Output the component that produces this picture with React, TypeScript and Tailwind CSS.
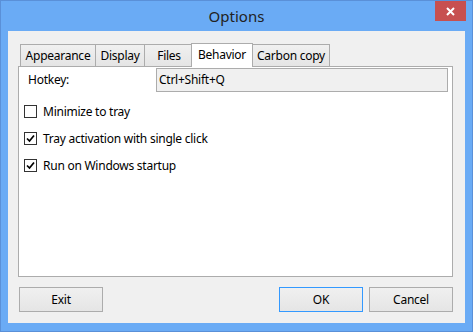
import { useState } from 'react';

const tabs = [
  { label: 'Appearance', width: 'w-[76px]', offset: '' },
  { label: 'Display', width: 'w-[50px]', offset: '-ml-px' },
  { label: 'Files', width: 'w-[50px]', offset: '-ml-px' },
  { label: 'Behavior', width: 'w-[62px]', offset: 'ml-[-3px]' },
  { label: 'Carbon copy', width: 'w-[78px]', offset: '-ml-px' },
];

function Checkbox({ label, checked, onToggle }: { label: string; checked: boolean; onToggle: () => void }) {
  return (
    <div className="flex items-center h-[13px] pl-[5px] cursor-default" onClick={onToggle}>
      <div className="w-[13px] h-[13px] border border-[#333333] bg-white flex items-center justify-center shrink-0">
        {checked && (
          <svg width="9" height="9" viewBox="0 0 9 9">
            <path d="M1 4.5 L3.5 7 L8 1.5" fill="none" stroke="#000" strokeWidth="1.7" />
          </svg>
        )}
      </div>
      <span className="ml-[6px] text-[12px] leading-none text-black">{label}</span>
    </div>
  );
}

export default function App() {
  const [active] = useState('Behavior');
  const [opts, setOpts] = useState({ minimize: false, single: true, startup: true });

  const toggle = (k: keyof typeof opts) => setOpts({ ...opts, [k]: !opts[k] });

  return (
    <div
      className="w-[473px] h-[332px] flex flex-col bg-[#6aabf5] border border-[#5a90d8] select-none tracking-[-0.25px]"
      style={{ fontFamily: '"Noto Sans", "Open Sans", sans-serif' }}
    >
      {/* Title bar */}
      <div className="h-[30px] flex items-start shrink-0">
        <div className="w-[37px]" />
        <div className="flex-1 text-center text-[15px] leading-[30px] text-[#222222] tracking-normal">Options</div>
        <div className="w-[31px] h-[20px] bg-[#c75050] flex items-center justify-center">
          <svg width="9" height="9" viewBox="0 0 9 9">
            <path d="M1 1 L8 8 M8 1 L1 8" stroke="#fff" strokeWidth="2" />
          </svg>
        </div>
        <div className="w-[6px]" />
      </div>

      {/* Client area */}
      <div className="mx-[7px] mb-[8px] flex-1 bg-[#f0f0f0] pt-[12px] pl-[10px] pr-[12px] flex flex-col">
        {/* Tabs */}
        <div className="flex items-end h-[23px] pl-[2px] relative z-10">
          {tabs.map((t) => {
            const sel = t.label === active;
            return (
              <div
                key={t.label}
                className={`${t.width} ${t.offset} flex items-center justify-center text-[12px] text-black border border-[#acacac] border-b-0 ${
                  sel ? 'h-[24px] mb-[-1px] bg-white z-10 relative pb-[2px]' : 'h-[22px] bg-gradient-to-b from-[#f0f0f0] to-[#e5e5e5]'
                }`}
              >
                {t.label}
              </div>
            );
          })}
        </div>

        {/* Panel */}
        <div className="h-[211px] border border-[#acacac] bg-white flex flex-col">
          <div className="flex items-center mt-[1px] pl-[9px]">
            <div className="w-[128px] text-[12px] text-black">Hotkey:</div>
            <div className="w-[292px] h-[24px] border border-[#acacac] bg-[#f0f0f0] flex items-center pl-[2px] text-[12px] text-black">
              Ctrl+Shift+Q
            </div>
          </div>
          <div className="flex flex-col gap-[14px] mt-[13px]">
            <Checkbox label="Minimize to tray" checked={opts.minimize} onToggle={() => toggle('minimize')} />
            <Checkbox label="Tray activation with single click" checked={opts.single} onToggle={() => toggle('single')} />
            <Checkbox label="Run on Windows startup" checked={opts.startup} onToggle={() => toggle('startup')} />
          </div>
        </div>

        {/* Buttons */}
        <div className="flex mt-[10px]">
          <button className="ml-[1px] w-[84px] h-[25px] border border-[#acacac] bg-gradient-to-b from-[#f0f0f0] to-[#e5e5e5] text-[12px] text-black">
            Exit
          </button>
          <div className="flex-1" />
          <button className="w-[84px] h-[25px] border border-[#3399ff] bg-gradient-to-b from-[#f0f0f0] to-[#e5e5e5] text-[12px] text-black">
            OK
          </button>
          <button className="ml-[6px] w-[84px] h-[25px] border border-[#acacac] bg-gradient-to-b from-[#f0f0f0] to-[#e5e5e5] text-[12px] text-black">
            Cancel
          </button>
        </div>
      </div>
    </div>
  );
}
